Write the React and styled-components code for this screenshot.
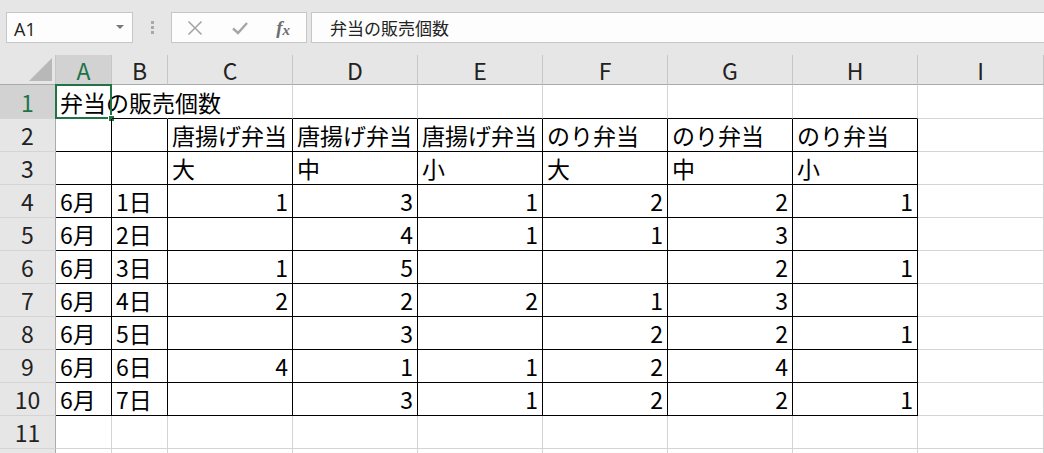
import React from "react";
import styled, { createGlobalStyle } from "styled-components";

const GlobalStyle = createGlobalStyle`
  html, body {
    margin: 0;
    padding: 0;
    background: #ffffff;
    overflow: hidden;
  }
  body {
    font-family: "Noto Sans CJK JP", "Noto Sans", sans-serif;
  }
`;

const COLS = ["A", "B", "C", "D", "E", "F", "G", "H", "I"];

// each row: [A, B, C, D, E, F, G, H]
const data = [
  ["弁当の販売個数", "", "", "", "", "", "", ""],
  ["", "", "唐揚げ弁当", "唐揚げ弁当", "唐揚げ弁当", "のり弁当", "のり弁当", "のり弁当"],
  ["", "", "大", "中", "小", "大", "中", "小"],
  ["6月", "1日", 1, 3, 1, 2, 2, 1],
  ["6月", "2日", "", 4, 1, 1, 3, ""],
  ["6月", "3日", 1, 5, "", "", 2, 1],
  ["6月", "4日", 2, 2, 2, 1, 3, ""],
  ["6月", "5日", "", 3, "", 2, 2, 1],
  ["6月", "6日", 4, 1, 1, 2, 4, ""],
  ["6月", "7日", "", 3, 1, 2, 2, 1],
];

function App() {
  const rows = [];
  for (let r = 0; r < 12; r++) {
    const rowNo = r + 1;
    const selected = rowNo === 1;
    rows.push(
      <RowHead key={"rh" + r} $selected={selected}>
        {rowNo <= 11 ? rowNo : null}
      </RowHead>
    );
    for (let c = 0; c < 9; c++) {
      const v = data[r] ? data[r][c] : undefined;
      const inTable = rowNo >= 2 && rowNo <= 10 && c <= 7;
      const aboveTable = rowNo === 1 && c <= 7;
      let right = "grid";
      if (inTable) right = "black";
      if (rowNo === 1 && (c === 0 || c === 1)) right = "none";
      let bottom = "grid";
      if (inTable || aboveTable) bottom = "black";
      const isNum = typeof v === "number";
      rows.push(
        <Cell
          key={r + "-" + c}
          $right={right}
          $bottom={bottom}
          $num={isNum}
        >
          {v !== undefined && v !== "" ? v : null}
          {rowNo === 1 && c === 0 && (
            <>
              <Selection />
              <Handle />
            </>
          )}
        </Cell>
      );
    }
  }

  return (
    <>
      <GlobalStyle />
      <Page>
        <Toolbar>
          <NameBox>
            <NameText>A1</NameText>
            <DropArrow />
          </NameBox>
          <Grip>
            <span />
            <span />
            <span />
          </Grip>
          <FxBox>
            <svg width="16" height="16" viewBox="0 0 16 16">
              <path d="M1.5 1.5 L14.5 14.5 M14.5 1.5 L1.5 14.5" stroke="#a6a6a6" strokeWidth="1.6" fill="none" />
            </svg>
            <svg width="18" height="16" viewBox="0 0 18 16">
              <path d="M2 8.5 L7 13 L16 3" stroke="#a6a6a6" strokeWidth="2.4" fill="none" />
            </svg>
            <FxText>
              f<sub>x</sub>
            </FxText>
          </FxBox>
          <FormulaInput>弁当の販売個数</FormulaInput>
        </Toolbar>
        <Sheet>
          <Corner />
          {COLS.map((c) => (
            <ColHead key={c} $selected={c === "A"}>
              {c}
            </ColHead>
          ))}
          {rows}
        </Sheet>
      </Page>
    </>
  );
}

export default App;

const Page = styled.div`
  width: 1044px;
  height: 453px;
  overflow: hidden;
  background: #ffffff;
`;

const Toolbar = styled.div`
  height: 55px;
  box-sizing: border-box;
  background: #e6e6e6;
  display: flex;
  align-items: flex-start;
  padding: 12px 0 0 6px;
`;

const NameBox = styled.div`
  width: 127px;
  height: 31px;
  box-sizing: border-box;
  background: #fdfdfd;
  border: 1px solid #c6c6c6;
  display: flex;
  align-items: center;
  justify-content: space-between;
  padding: 0 8px 0 7px;
`;

const NameText = styled.span`
  font-family: "Open Sans", "Noto Sans", sans-serif;
  font-size: 18px;
  color: #222;
  padding-top: 2px;
`;

const DropArrow = styled.span`
  width: 0;
  height: 0;
  border-left: 4px solid transparent;
  border-right: 4px solid transparent;
  border-top: 4px solid #777;
  margin-top: -2px;
`;

const Grip = styled.div`
  width: 38px;
  height: 31px;
  display: flex;
  flex-direction: column;
  align-items: center;
  justify-content: center;
  gap: 2px;
  span {
    width: 3px;
    height: 3px;
    background: #a9a9a9;
  }
`;

const FxBox = styled.div`
  width: 136px;
  height: 31px;
  box-sizing: border-box;
  background: #fdfdfd;
  border: 1px solid #c6c6c6;
  display: flex;
  align-items: center;
  justify-content: space-between;
  padding: 0 16px 0 15px;
`;

const FxText = styled.span`
  font-family: "Liberation Serif", "DejaVu Serif", serif;
  font-style: italic;
  font-weight: bold;
  font-size: 19px;
  color: #6e6e6e;
  sub {
    font-size: 15px;
    vertical-align: -1px;
  }
`;

const FormulaInput = styled.div`
  flex: 1;
  height: 31px;
  box-sizing: border-box;
  margin-left: 4px;
  margin-right: -2px;
  background: #fdfdfd;
  border: 1px solid #c6c6c6;
  display: flex;
  align-items: center;
  padding-left: 18px;
  font-size: 17px;
  color: #222;
`;

const Sheet = styled.div`
  display: grid;
  grid-template-columns: 56px 56px 56px repeat(6, 125px) 126px;
  grid-template-rows: 30px 34px repeat(11, 33px);
  font-size: 23px;
  color: #000;
`;

const Corner = styled.div`
  background: #e6e6e6;
  border-right: 1px solid #c6c6c6;
  border-bottom: 1px solid #ababab;
  box-sizing: border-box;
  position: relative;
  &::after {
    content: "";
    position: absolute;
    right: 3px;
    bottom: 3px;
    width: 0;
    height: 0;
    border-left: 23px solid transparent;
    border-bottom: 23px solid #b8b8b8;
  }
`;

const ColHead = styled.div`
  background: ${(p) => (p.$selected ? "#d2d2d2" : "#e6e6e6")};
  color: ${(p) => (p.$selected ? "#217346" : "#222")};
  border-right: 1px solid #c6c6c6;
  border-bottom: 1px solid #ababab;
  box-sizing: border-box;
  display: flex;
  align-items: center;
  justify-content: center;
  line-height: 1;
  padding-top: 1px;
`;

const RowHead = styled.div`
  background: ${(p) => (p.$selected ? "#d2d2d2" : "#e6e6e6")};
  color: ${(p) => (p.$selected ? "#217346" : "#222")};
  border-right: 1px solid #ababab;
  border-bottom: 1px solid #d4d4d4;
  box-sizing: border-box;
  display: flex;
  align-items: center;
  justify-content: center;
  line-height: 1;
  padding-top: 1px;
`;

const borderColor = (v) =>
  v === "black" ? "#000" : v === "none" ? "transparent" : "#d4d4d4";

const Cell = styled.div`
  position: relative;
  box-sizing: border-box;
  border-right: 1px solid ${(p) => borderColor(p.$right)};
  border-bottom: 1px solid ${(p) => borderColor(p.$bottom)};
  display: flex;
  align-items: center;
  justify-content: ${(p) => (p.$num ? "flex-end" : "flex-start")};
  padding: 1px 4px 0 4px;
  white-space: nowrap;
  line-height: 1;
  overflow: visible;
`;

const Selection = styled.span`
  position: absolute;
  left: -1px;
  top: -1px;
  right: -1px;
  bottom: -1px;
  border: 2px solid #217346;
  pointer-events: none;
`;

const Handle = styled.span`
  position: absolute;
  right: -4px;
  bottom: -4px;
  width: 5px;
  height: 5px;
  background: #217346;
  border: 1px solid #fff;
`;
